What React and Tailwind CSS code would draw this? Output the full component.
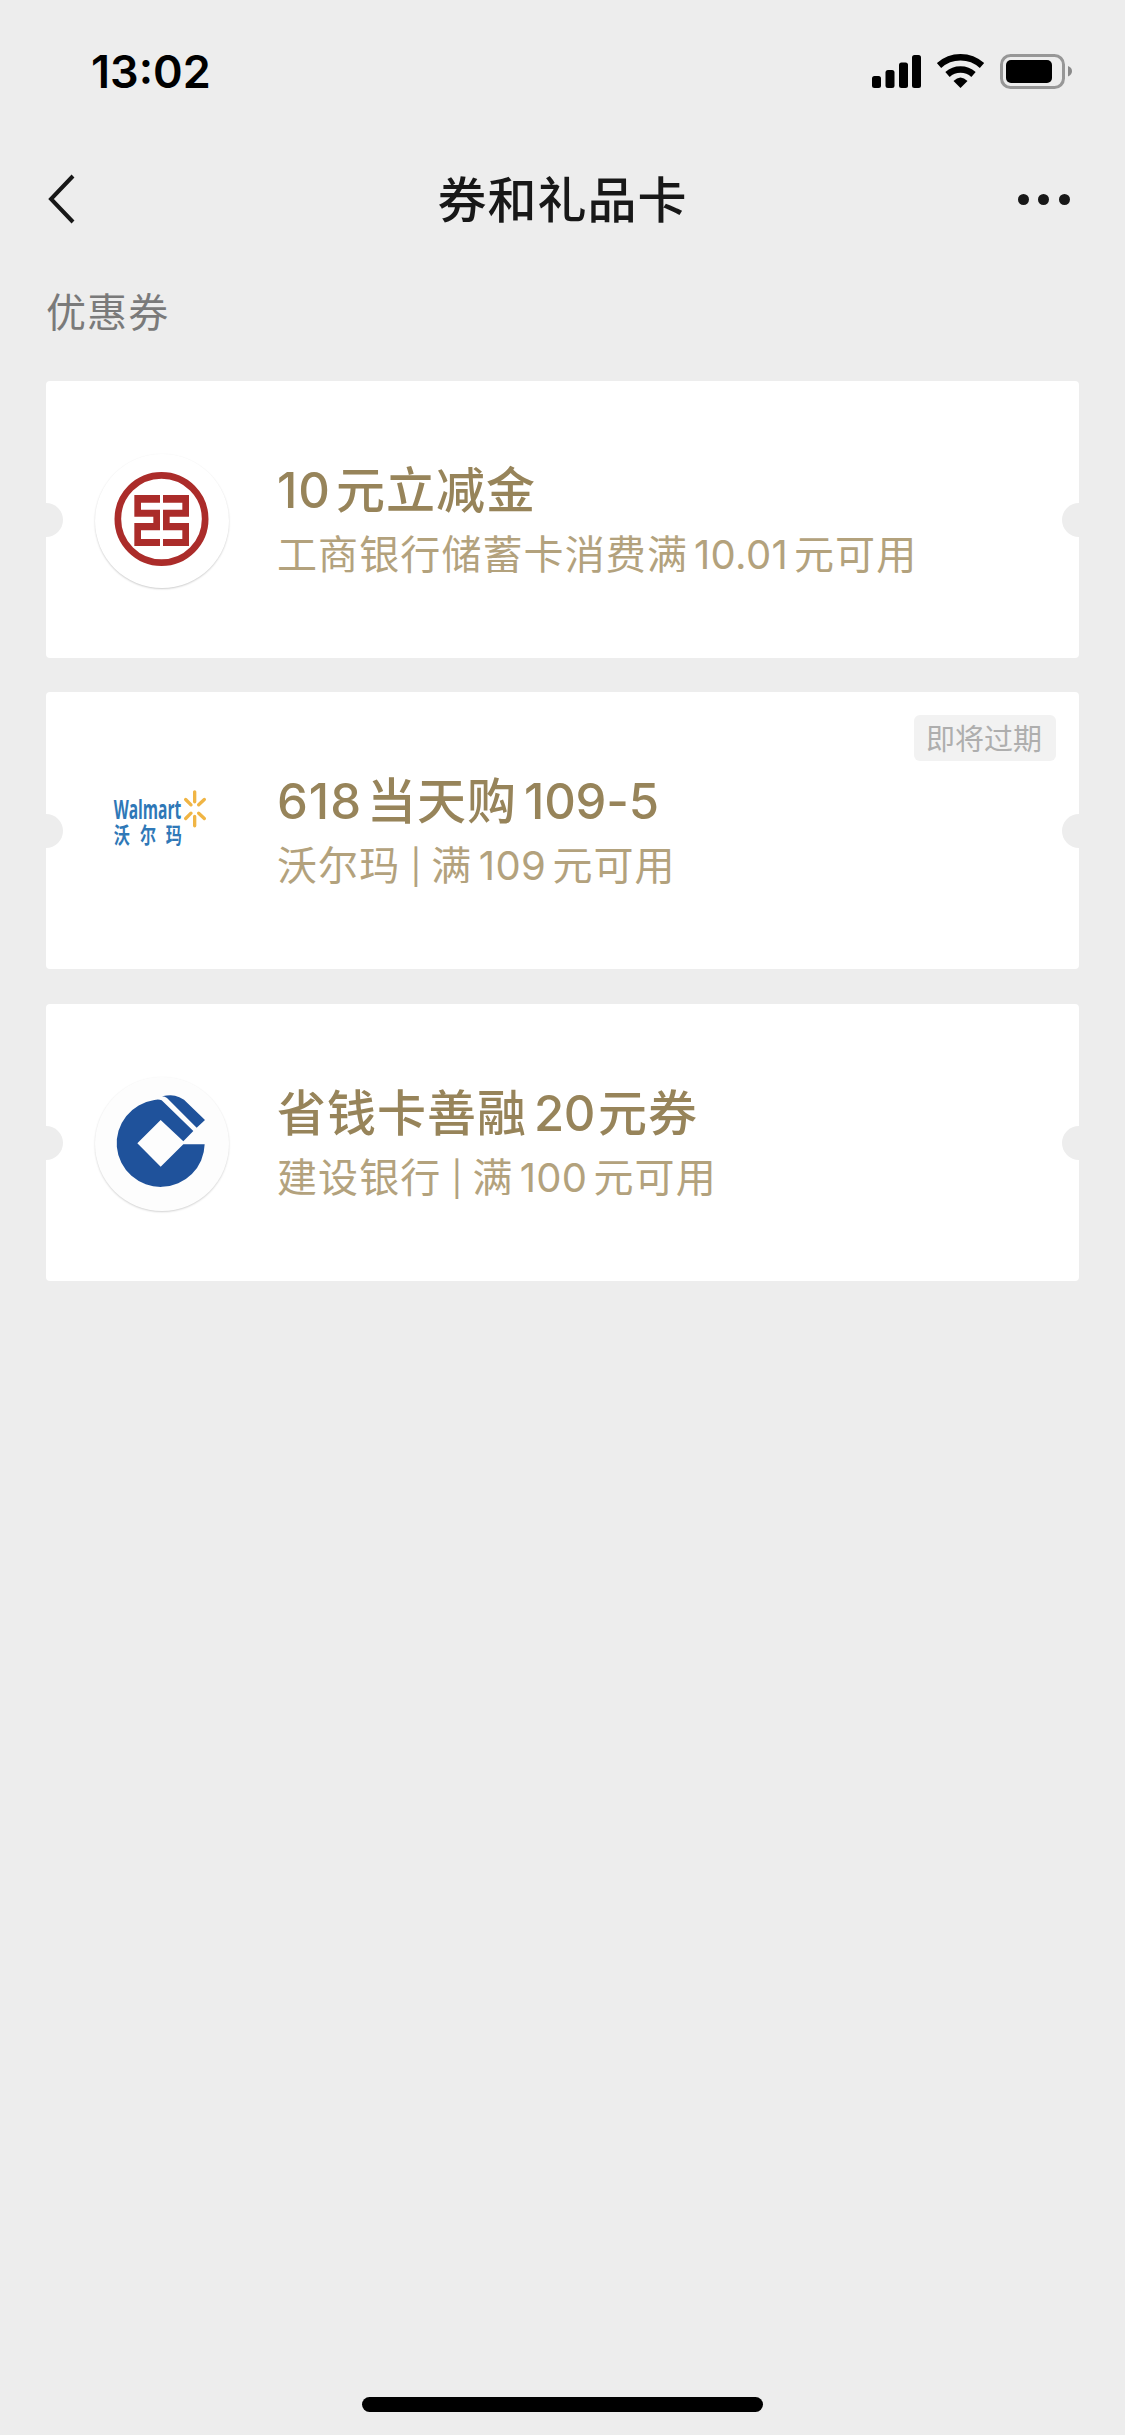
import React from 'react';

const IcbcLogo = () => (
    <svg viewBox="165 42 402 402" className="w-full h-full">
        <circle cx="364.5" cy="237" r="131" fill="none" stroke="#ab2c2a" strokeWidth="20" />
        <g fill="#ab2c2a">
            <path d="M283 165H360V188H303V209H360V271H303V297H360V318H283V249H340V230H283Z" />
            <path d="M447 165H369V188H427V209H369V271H427V297H369V318H447V249H389V230H447Z" />
        </g>
    </svg>
);

const WalmartLogo = () => (
    <svg viewBox="165 46.5 402 402" className="w-full h-full overflow-visible">
        <text x="221" y="209" textLength="203" lengthAdjust="spacingAndGlyphs" fill="#2f78b7" className="text-[82px] font-bold font-['Open_Sans',sans-serif]">Walmart</text>
        <g fill="#2f78b7" className="text-[66px] font-bold font-['Noto_Sans_CJK_SC',sans-serif]">
            <text transform="translate(221 281) scale(.73 1)">沃</text>
            <text transform="translate(300 281) scale(.73 1)">尔</text>
            <text transform="translate(377 281) scale(.73 1)">玛</text>
        </g>
        <path d="M464 127V157M464 201V229M437 150L453 166M493 150L476 166M437 207L453 191M493 207L476 191" stroke="#f0b545" strokeWidth="10" strokeLinecap="round" fill="none" />
    </svg>
);

const CcbLogo = () => (
    <svg viewBox="165 51 402 402" className="w-full h-full">
        <g fill="#1f529b">
            <path d="M494 253A132 131 0 1 1 343 120Q356 117 365 121L460 213L430 244L362 180L292 250L362 320L430 253Z" />
            <path d="M366 109Q388 104 405 107Q418 110 432 119L495 180L470 203L381 114Q375 110 366 109Z" />
        </g>
    </svg>
);

const Bar = () => <span className="inline-block w-[31px] text-center text-[34px] leading-none tracking-normal relative -top-[1px]">|</span>;

const coupons = [
    {
        logo: <IcbcLogo />,
        disc: "bg-white shadow-[0_1px_2px_rgba(0,0,0,0.2)]",
        title: <><span className="inline-block w-[59px]">10</span>元立减金</>,
        desc: <>工商银行储蓄卡消费满<span className="inline-block w-[106px] text-center tracking-[0.3px]">10.01</span>元可用</>,
    },
    {
        logo: <WalmartLogo />,
        disc: "",
        title: <><span className="inline-block w-[90px]">618</span>当天购<span className="inline-block pl-[7px] tracking-[-0.2px]">109-5</span></>,
        desc: <>沃尔玛<Bar />满<span className="inline-block w-[80px] text-center tracking-[0.3px]">109</span>元可用</>,
        tag: "即将过期",
    },
    {
        logo: <CcbLogo />,
        disc: "bg-[#fdfdfd] shadow-[0_1px_2px_rgba(0,0,0,0.18)]",
        title: <>省钱卡善融<span className="inline-block w-[71px] pl-[7px] tracking-[-0.5px]">20</span>元券</>,
        desc: <>建设银行<Bar />满<span className="inline-block w-[80px] text-center tracking-[0.3px]">100</span>元可用</>,
    },
];

function StatusBar() {
    return (
        <div className="flex h-[144px] justify-between pl-[91px] pr-[53px]">
            <span className="mt-[45px] text-[45px] leading-[54px] font-semibold text-black">13:02</span>
            <div className="flex mt-[53px] h-[36px]">
                <svg width="49" height="36" viewBox="0 0 49 36">
                    <rect x="0" y="23" width="9" height="12" rx="2.5" />
                    <rect x="13.5" y="17" width="9" height="18" rx="2.5" />
                    <rect x="27" y="9.5" width="9" height="25.500" rx="2.5" />
                    <rect x="40" y="2" width="9" height="33" rx="2.5" />
                </svg>
                <svg className="ml-[16px]" width="48" height="36" viewBox="0 0 48 36">
                    <path d="M2 12.500A32 32 0 0 1 45 12.500" fill="none" stroke="#000" strokeWidth="6.500" />
                    <path d="M10.500 21.500A19.500 19.500 0 0 1 36.500 21.500" fill="none" stroke="#000" strokeWidth="6.500" />
                    <path d="M16.500 28Q23.500 21 30.500 28L23.500 35Z" />
                </svg>
                <svg className="ml-[14px]" width="73" height="36" viewBox="0 0 73 36">
                    <rect x="2.500" y="2.500" width="62" height="32" rx="9" fill="none" stroke="#979797" strokeWidth="3" />
                    <rect x="7" y="7" width="46" height="23" rx="5" />
                    <path d="M69 13Q73 14.500 73 18T69 23.500Z" fill="#8a8a8a" />
                </svg>
            </div>
        </div>
    );
}

function NavBar() {
    return (
        <div className="flex items-center justify-between h-[110px] pl-[48px] pr-[55px]">
            <svg width="60" height="50" viewBox="0 0 60 50" fill="none" stroke="#181818" strokeWidth="4">
                <path d="M25 2L3 25L25 48" />
            </svg>
            <h1 className="pt-[4px] pl-[2px] text-[49px] leading-[60px] font-medium tracking-[1px] text-[#181818]">券和礼品卡</h1>
            <div className="flex w-[55px] justify-end gap-[9.5px]">
                <span className="w-[11px] h-[11px] shrink-0 rounded-full bg-[#181818]" />
                <span className="w-[11px] h-[11px] shrink-0 rounded-full bg-[#181818]" />
                <span className="w-[11px] h-[11px] shrink-0 rounded-full bg-[#181818]" />
            </div>
        </div>
    );
}

function Coupon({ coupon }) {
    return (
        <div className="relative flex h-[277px] overflow-hidden rounded-[4px] bg-white">
            <span className="absolute -left-[17px] top-[122px] w-[34px] h-[34px] rounded-full bg-[#ededed]" />
            <span className="absolute -right-[17px] top-[122px] w-[34px] h-[34px] rounded-full bg-[#ededed]" />
            <div className={`ml-[49px] mt-[73px] w-[134px] h-[134px] shrink-0 rounded-full ${coupon.disc}`}>{coupon.logo}</div>
            <div className="ml-[48px] mt-[79px] whitespace-nowrap">
                <h2 className="text-[49px] leading-[62px] font-medium tracking-[1px] text-[#97845a]">{coupon.title}</h2>
                <p className="mt-[6px] text-[40px] leading-[54px] tracking-[1.1px] text-[#b3a27d]">{coupon.desc}</p>
            </div>
            {coupon.tag && (
                <span className="absolute right-[23px] top-[23px] w-[142px] h-[46px] rounded-[6px] bg-[#f2f2f2] pr-[2px] text-center text-[29px] leading-[49px] text-[#aeaeae]">{coupon.tag}</span>
            )}
        </div>
    );
}

export default function App() {
    return (
        <div className="flex flex-col w-[1125px] h-[2435px] overflow-hidden bg-[#ededed] font-['Inter','Noto_Sans_CJK_SC',sans-serif]">
            <StatusBar />
            <NavBar />
            <p className="ml-[46px] mt-[32px] text-[40px] leading-[54px] tracking-[1.1px] text-[#7a7a7a]">优惠券</p>
            <div className="flex flex-col gap-[34.5px] mx-[46px] mt-[40.7px]">
                {coupons.map((coupon, i) => <Coupon coupon={coupon} key={i} />)}
            </div>
            <div className="mt-auto mb-[23px] w-[401px] h-[15px] self-center rounded-full bg-black" />
        </div>
    );
}
